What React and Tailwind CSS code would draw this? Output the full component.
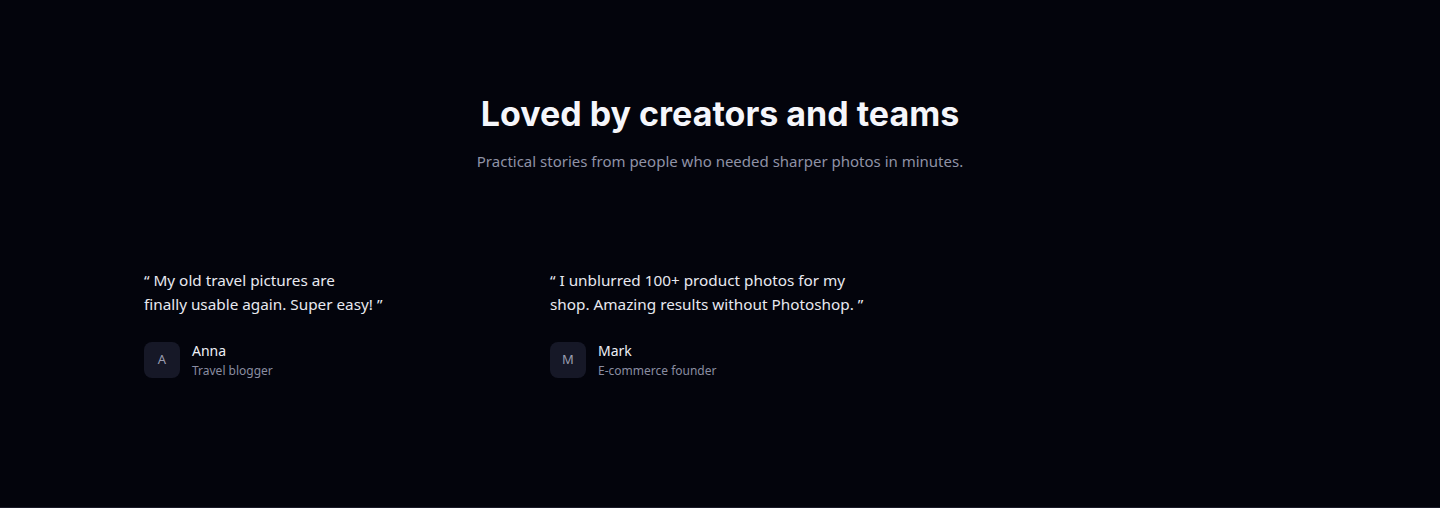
import React from "react";

const testimonials = [
  {
    quote: ["“ My old travel pictures are", "finally usable again. Super easy! ”"],
    initial: "A",
    name: "Anna",
    role: "Travel blogger",
  },
  {
    quote: ["“ I unblurred 100+ product photos for my", "shop. Amazing results without Photoshop. ”"],
    initial: "M",
    name: "Mark",
    role: "E-commerce founder",
  },
];

export default function App() {
  return (
    <div
      className="w-full h-[508px] bg-[#03040c] border-b border-[#1a1b28] overflow-hidden"
      style={{ fontFamily: "'Noto Sans', Lato, sans-serif" }}
    >
      <div className="pt-[92px] text-center">
        <h2
          className="text-[34px] leading-[44px] font-bold text-[#f5f6fb]"
          style={{ fontFamily: "Inter, 'Noto Sans', sans-serif" }}
        >
          Loved by creators and teams
        </h2>
        <p className="mt-[14px] text-[15px] leading-[22px] text-[#8f92a6]">
          Practical stories from people who needed sharper photos in minutes.
        </p>
      </div>
      <div className="mx-auto mt-[96px] w-[1200px] grid grid-cols-3 gap-[18px]">
        {testimonials.map((t) => (
          <div key={t.name} className="flex flex-col px-[24px]">
            <p className="text-[15.3px] leading-[24px] text-[#e8e9f0]">
              {t.quote[0]}
              <br />
              {t.quote[1]}
            </p>
            <div className="mt-[26px] flex items-start gap-[12px]">
              <div className="w-[36px] h-[36px] rounded-[8px] bg-[#161827] flex items-center justify-center text-[13px] text-[#9a9db0]">
                {t.initial}
              </div>
              <div className="flex flex-col -mt-[1px]">
                <span className="text-[14px] leading-[20px] text-[#eef0f6]">{t.name}</span>
                <span className="text-[12px] leading-[20px] text-[#8a8da1]">{t.role}</span>
              </div>
            </div>
          </div>
        ))}
      </div>
    </div>
  );
}
